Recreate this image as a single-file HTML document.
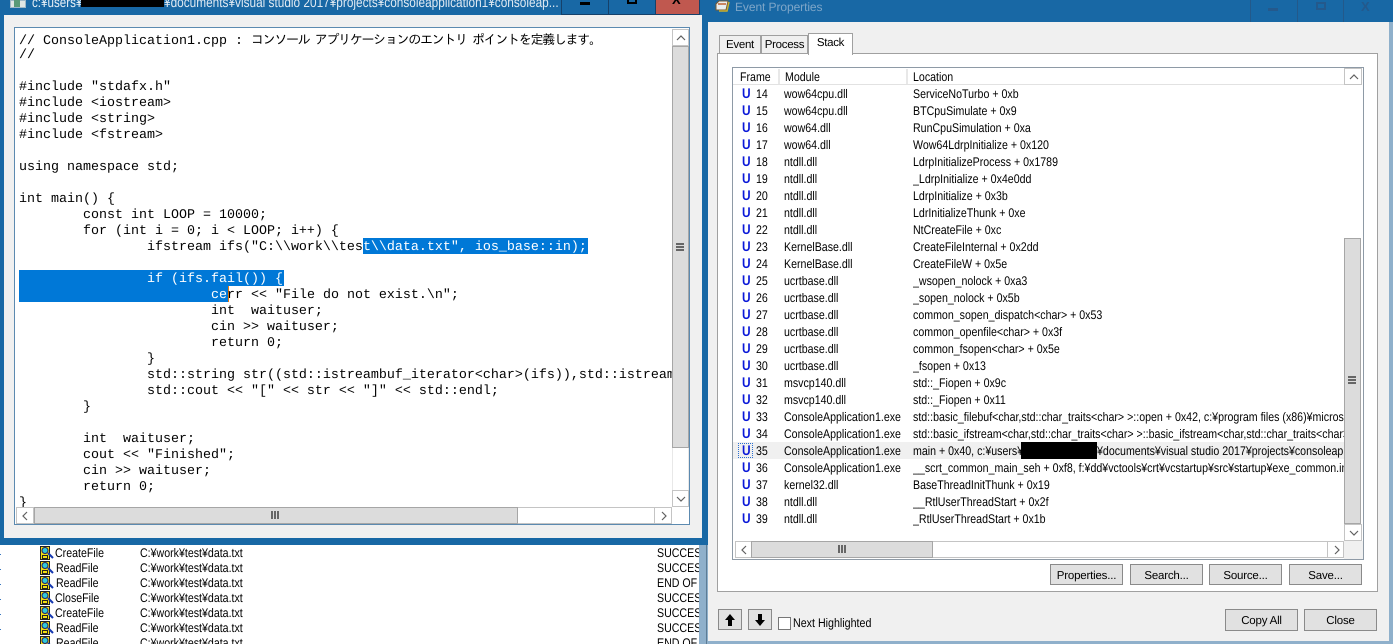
<!DOCTYPE html>
<html><head><meta charset="utf-8"><style>
html,body{margin:0;padding:0;width:1393px;height:644px;overflow:hidden;background:#fff}
div,span{position:absolute;box-sizing:border-box}
svg{position:absolute}
body{font-family:"Liberation Sans","Noto Sans CJK JP",sans-serif;color:#000;text-rendering:geometricPrecision}
.ui{font-size:12.5px;transform:scaleX(.855);transform-origin:left center;white-space:pre;line-height:15px}
.bg{white-space:pre;font-size:12.5px;transform:scaleX(.85);transform-origin:left center;line-height:15px;color:#000}
.code{left:19px;top:30px;font:13.33px/16px "Liberation Mono","IPAGothic",monospace;white-space:normal;width:1000px;color:#000}
.l{position:static;display:block;height:16px;white-space:pre}
.sb{background:#fff;border:1px solid #c4c4c4}
.th{background:#dcdcdc;border:1px solid #a6a6a6}
.btn{background:#e1e1e1;border:1px solid #8a8a8a;font-size:11.5px;letter-spacing:-.2px;text-align:center;line-height:22px;color:#000}
.r{position:relative;display:block;height:17px;width:612px;line-height:17px;font-size:12.5px;white-space:pre;color:#000}
.r b{position:absolute;left:9px;top:-1px;color:#0a18d8;font:bold 14px/17px "Liberation Sans",sans-serif;transform:scaleX(.85);transform-origin:left center}
.r i,.r u,.r s,.r em{position:absolute;font-style:normal;text-decoration:none;top:0;transform:scaleX(.85);transform-origin:left center}
.r i{left:23px}.r u{left:51px}.r s{left:180px;width:507px;overflow:hidden}.r em{left:364px;width:290px;overflow:hidden}
.hc{top:69px;height:15px;line-height:16px;font-size:12.5px;transform:scaleX(.85);transform-origin:left center;color:#000;white-space:pre}
.tab{font-size:11.5px;letter-spacing:-.3px;text-align:center;border:1px solid #a0a0a0;background:#f0f0f0;color:#000}
</style></head><body>

<svg width="0" height="0" style="position:absolute"><defs>
<symbol id="fi" viewBox="0 0 14 14"><rect x="0.5" y="0.5" width="9" height="13" fill="#f4e010" stroke="#222"/><circle cx="5" cy="4.5" r="3" fill="#30c8d8" stroke="#226"/><rect x="2.5" y="9.5" width="5" height="3" fill="#f4e010" stroke="#222"/><path d="M8 7L13 12" stroke="#1438b0" stroke-width="2"/></symbol>
</defs></svg>

<!-- Background list -->
<div style="left:0;top:545px;width:700px;height:99px;background:#fff;overflow:hidden">
<div style="left:0;top:3px;width:1px;height:96px;background:repeating-linear-gradient(#fff 0 6px,#3a78c0 6px 7px,#fff 7px 15px)"></div>
<svg style="left:40px;top:1px" width="14" height="14"><use href="#fi"/></svg>
<svg style="left:40px;top:16px" width="14" height="14"><use href="#fi"/></svg>
<svg style="left:40px;top:31px" width="14" height="14"><use href="#fi"/></svg>
<svg style="left:40px;top:46px" width="14" height="14"><use href="#fi"/></svg>
<svg style="left:40px;top:61px" width="14" height="14"><use href="#fi"/></svg>
<svg style="left:40px;top:76px" width="14" height="14"><use href="#fi"/></svg>
<svg style="left:40px;top:91px" width="14" height="14"><use href="#fi"/></svg>
<span class="bg" style="left:55px;top:1px">CreateFile</span><span class="bg" style="left:140px;top:1px">C:¥work¥test¥data.txt</span><span class="bg" style="left:657px;top:1px">SUCCESS</span>
<span class="bg" style="left:56px;top:16px">ReadFile</span><span class="bg" style="left:140px;top:16px">C:¥work¥test¥data.txt</span><span class="bg" style="left:657px;top:16px">SUCCESS</span>
<span class="bg" style="left:56px;top:31px">ReadFile</span><span class="bg" style="left:140px;top:31px">C:¥work¥test¥data.txt</span><span class="bg" style="left:657px;top:31px">END OF FILE</span>
<span class="bg" style="left:55px;top:46px">CloseFile</span><span class="bg" style="left:140px;top:46px">C:¥work¥test¥data.txt</span><span class="bg" style="left:657px;top:46px">SUCCESS</span>
<span class="bg" style="left:55px;top:61px">CreateFile</span><span class="bg" style="left:140px;top:61px">C:¥work¥test¥data.txt</span><span class="bg" style="left:657px;top:61px">SUCCESS</span>
<span class="bg" style="left:56px;top:76px">ReadFile</span><span class="bg" style="left:140px;top:76px">C:¥work¥test¥data.txt</span><span class="bg" style="left:657px;top:76px">SUCCESS</span>
<span class="bg" style="left:56px;top:91px">ReadFile</span><span class="bg" style="left:140px;top:91px">C:¥work¥test¥data.txt</span><span class="bg" style="left:657px;top:91px">END OF FILE</span>
</div>
<div style="left:699px;top:545px;width:7px;height:99px;background:#8fb0cb"></div>

<!-- Left window -->
<div style="left:0;top:0;width:707px;height:545px;background:#1868a5;overflow:hidden">
  <div style="left:10px;top:0;width:16px;height:8px;background:#dfe6e4;border:1px solid #9fb8c8"></div>
  <div style="left:14px;top:0;width:6px;height:7px;background:#5a9a78"></div>
  <span style="left:32px;top:-6px;font-size:14px;line-height:16px;color:#e8f0f6;transform:scaleX(.83);transform-origin:left center;white-space:pre">c:¥users¥</span>
  <span style="left:164px;top:-6px;font-size:14px;line-height:16px;color:#dfe9f2;transform:scaleX(.845);transform-origin:left center;white-space:pre">¥documents¥visual studio 2017¥projects¥consoleapplication1¥consoleap...</span>
  <div style="left:81px;top:0;width:83px;height:7px;background:#000"></div>
  <div style="left:561px;top:0;width:48px;height:15px;background:#1868a5;border:1px solid #16416a;border-top:0"></div>
  <div style="left:608px;top:0;width:48px;height:15px;background:#1868a5;border:1px solid #16416a;border-top:0"></div>
  <div style="left:655px;top:0;width:45px;height:15px;background:#c0584f;border:1px solid #16416a;border-top:0"></div>
  <div style="left:580px;top:2px;width:10px;height:3px;background:#000"></div>
  <div style="left:627px;top:-3px;width:10px;height:7px;border:2px solid #000"></div>
  <span style="left:672px;top:-6px;font:bold 13px/12px 'Liberation Sans',sans-serif">X</span>

  <div style="left:4px;top:15px;width:698px;height:523px;background:#f0f0f0"></div>
  <div style="left:14px;top:27px;width:676px;height:498px;background:#fff;border:1px solid #5c8ab0;overflow:hidden"></div>

  <div style="left:15px;top:28px;width:657px;height:479px;overflow:hidden">
    <div style="top:210px;width:225px;height:16px;left:348px;background:#0078d7"></div>
    <div style="left:4px;top:242px;width:265px;height:16px;background:#0078d7"></div>
    <div style="left:4px;top:258px;width:209px;height:16px;background:#0078d7"></div>
    <div style="left:213px;top:258px;width:1px;height:16px;background:#e87a10"></div>
    <div class="code" style="left:4px;top:4px">
<span class="l">// ConsoleApplication1.cpp : <span style="position:static;font-size:13px;letter-spacing:-1.3px;font-family:'IPAGothic','Noto Sans CJK JP',monospace">コンソール アプリケーションのエントリ ポイントを定義します。</span></span>
<span class="l">//</span>
<span class="l"> </span>
<span class="l">#include "stdafx.h"</span>
<span class="l">#include &lt;iostream&gt;</span>
<span class="l">#include &lt;string&gt;</span>
<span class="l">#include &lt;fstream&gt;</span>
<span class="l"> </span>
<span class="l">using namespace std;</span>
<span class="l"> </span>
<span class="l">int main() {</span>
<span class="l">        const int LOOP = 10000;</span>
<span class="l">        for (int i = 0; i &lt; LOOP; i++) {</span>
<span class="l">                ifstream ifs("C:\\work\\tes<span style="position:static;color:#fff">t\\data.txt", ios_base::in);</span></span>
<span class="l"> </span>
<span class="l" style="color:#fff">                if (ifs.fail()) {</span>
<span class="l">                        <span style="position:static;color:#fff">ce</span>rr &lt;&lt; "File do not exist.\n";</span>
<span class="l">                        int  waituser;</span>
<span class="l">                        cin &gt;&gt; waituser;</span>
<span class="l">                        return 0;</span>
<span class="l">                }</span>
<span class="l">                std::string str((std::istreambuf_iterator&lt;char&gt;(ifs)),std::istreambuf_iterator&lt;char&gt;());</span>
<span class="l">                std::cout &lt;&lt; "[" &lt;&lt; str &lt;&lt; "]" &lt;&lt; std::endl;</span>
<span class="l">        }</span>
<span class="l"> </span>
<span class="l">        int  waituser;</span>
<span class="l">        cout &lt;&lt; "Finished";</span>
<span class="l">        cin &gt;&gt; waituser;</span>
<span class="l">        return 0;</span>
<span class="l">}</span>
    </div>
  </div>

  <!-- v scroll -->
  <div class="sb" style="left:672px;top:29px;width:17px;height:17px"><svg style="left:3px;top:4px" width="10" height="8"><path d="M1 6L5 2L9 6" fill="none" stroke="#606060" stroke-width="1.2"/></svg></div>
  <div style="left:672px;top:46px;width:17px;height:444px;background:#fff;border-left:1px solid #e8e8e8;border-right:1px solid #e8e8e8"></div>
  <div class="th" style="left:672px;top:46px;width:17px;height:402px"></div>
  <div style="left:676px;top:243px;width:8px;height:8px;background:repeating-linear-gradient(#666 0 2px,#dcdcdc 2px 3px)"></div>
  <div class="sb" style="left:672px;top:490px;width:17px;height:17px"><svg style="left:3px;top:4px" width="10" height="8"><path d="M1 2L5 6L9 2" fill="none" stroke="#606060" stroke-width="1.2"/></svg></div>
  <!-- h scroll -->
  <div class="sb" style="left:16px;top:507px;width:656px;height:17px"></div>
  <div class="sb" style="left:16px;top:507px;width:18px;height:17px"><svg style="left:4px;top:3px" width="8" height="10"><path d="M6 1L2 5L6 9" fill="none" stroke="#606060" stroke-width="1.2"/></svg></div>
  <div class="th" style="left:34px;top:507px;width:484px;height:17px"></div>
  <div style="left:271px;top:511px;width:8px;height:8px;background:repeating-linear-gradient(90deg,#666 0 2px,#dcdcdc 2px 3px)"></div>
  <div class="sb" style="left:654px;top:507px;width:18px;height:17px"><svg style="left:5px;top:3px" width="8" height="10"><path d="M2 1L6 5L2 9" fill="none" stroke="#606060" stroke-width="1.2"/></svg></div>
</div>

<!-- Right window -->
<div style="left:706px;top:0;width:687px;height:644px;background:#8fb0cb;overflow:hidden">
  <div style="left:0;top:0;width:687px;height:22px;background:#1868a5"></div>
  <div style="left:0;top:22px;width:2px;height:523px;background:#1868a5"></div>
  <div style="left:0;top:545px;width:1px;height:99px;background:#5d7c95"></div>
  <svg style="left:9px;top:0" width="15" height="13"><path d="M1 4L4 1H13L11 10H1Z" fill="#e8eef0" stroke="#7a5a30"/><path d="M4 11H12L14 2" fill="none" stroke="#c8b030" stroke-width="1.5"/><path d="M3 4H11" stroke="#c06030" stroke-width="1.5"/></svg>
  <span style="left:29px;top:0;font-size:12px;line-height:14px;color:#7ea6c8;letter-spacing:-.08px;white-space:pre">Event Properties</span>
  <div style="left:544px;top:0;width:1px;height:22px;background:#23598a"></div>
  <div style="left:591px;top:0;width:1px;height:22px;background:#23598a"></div>
  <div style="left:637px;top:0;width:1px;height:22px;background:#23598a"></div>
  <div style="left:562px;top:8px;width:10px;height:3px;background:#24598c"></div>
  <div style="left:610px;top:2px;width:10px;height:8px;border:2px solid #24598c"></div>
  <span style="left:655px;top:1px;font:bold 13px/12px 'Liberation Sans',sans-serif;color:#24598c">X</span>

  <div style="left:2px;top:22px;width:681px;height:619px;background:#f0f0f0"></div>

  <!-- panel -->
  <div style="left:11px;top:53px;width:661px;height:539px;background:#fff;border:1px solid #a0a0a0"></div>
  <div class="tab" style="left:13px;top:35px;width:42px;height:19px;line-height:19px">Event</div>
  <div class="tab" style="left:55px;top:35px;width:47px;height:19px;line-height:19px">Process</div>
  <div class="tab" style="left:102px;top:33px;width:45px;height:22px;line-height:19px;background:#fff;border-bottom:0">Stack</div>

  <!-- list -->
  <div style="left:26px;top:67px;width:632px;height:493px;background:#fff;border:1px solid #8e9aa6;overflow:hidden"></div>
  <div style="left:27px;top:68px;width:612px;height:17px;background:#fff;border-bottom:1px solid #e2e2e2"></div>
  <div style="left:72px;top:69px;width:2px;height:15px;background:#e8e8e8"></div>
  <div style="left:200px;top:69px;width:2px;height:15px;background:#e8e8e8"></div>
  <span class="hc" style="left:34px">Frame</span>
  <span class="hc" style="left:79px">Module</span>
  <span class="hc" style="left:207px">Location</span>

  <div style="left:27px;top:442px;width:612px;height:17px;background:#f0f0f0"></div>
  <div style="left:32px;top:443px;width:15px;height:15px;border:1px dotted #2a6fd0"></div>
  <div style="left:27px;top:86px;width:612px;height:440px;overflow:hidden">
<span class="r"><b>U</b><i>14</i><u>wow64cpu.dll</u><s>ServiceNoTurbo + 0xb</s></span>
<span class="r"><b>U</b><i>15</i><u>wow64cpu.dll</u><s>BTCpuSimulate + 0x9</s></span>
<span class="r"><b>U</b><i>16</i><u>wow64.dll</u><s>RunCpuSimulation + 0xa</s></span>
<span class="r"><b>U</b><i>17</i><u>wow64.dll</u><s>Wow64LdrpInitialize + 0x120</s></span>
<span class="r"><b>U</b><i>18</i><u>ntdll.dll</u><s>LdrpInitializeProcess + 0x1789</s></span>
<span class="r"><b>U</b><i>19</i><u>ntdll.dll</u><s>_LdrpInitialize + 0x4e0dd</s></span>
<span class="r"><b>U</b><i>20</i><u>ntdll.dll</u><s>LdrpInitialize + 0x3b</s></span>
<span class="r"><b>U</b><i>21</i><u>ntdll.dll</u><s>LdrInitializeThunk + 0xe</s></span>
<span class="r"><b>U</b><i>22</i><u>ntdll.dll</u><s>NtCreateFile + 0xc</s></span>
<span class="r"><b>U</b><i>23</i><u>KernelBase.dll</u><s>CreateFileInternal + 0x2dd</s></span>
<span class="r"><b>U</b><i>24</i><u>KernelBase.dll</u><s>CreateFileW + 0x5e</s></span>
<span class="r"><b>U</b><i>25</i><u>ucrtbase.dll</u><s>_wsopen_nolock + 0xa3</s></span>
<span class="r"><b>U</b><i>26</i><u>ucrtbase.dll</u><s>_sopen_nolock + 0x5b</s></span>
<span class="r"><b>U</b><i>27</i><u>ucrtbase.dll</u><s>common_sopen_dispatch&lt;char&gt; + 0x53</s></span>
<span class="r"><b>U</b><i>28</i><u>ucrtbase.dll</u><s>common_openfile&lt;char&gt; + 0x3f</s></span>
<span class="r"><b>U</b><i>29</i><u>ucrtbase.dll</u><s>common_fsopen&lt;char&gt; + 0x5e</s></span>
<span class="r"><b>U</b><i>30</i><u>ucrtbase.dll</u><s>_fsopen + 0x13</s></span>
<span class="r"><b>U</b><i>31</i><u>msvcp140.dll</u><s>std::_Fiopen + 0x9c</s></span>
<span class="r"><b>U</b><i>32</i><u>msvcp140.dll</u><s>std::_Fiopen + 0x11</s></span>
<span class="r"><b>U</b><i>33</i><u>ConsoleApplication1.exe</u><s>std::basic_filebuf&lt;char,std::char_traits&lt;char&gt; &gt;::open + 0x42, c:¥program files (x86)¥microsoft visual studio</s></span>
<span class="r"><b>U</b><i>34</i><u>ConsoleApplication1.exe</u><s>std::basic_ifstream&lt;char,std::char_traits&lt;char&gt; &gt;::basic_ifstream&lt;char,std::char_traits&lt;char&gt; &gt;</s></span>
<span class="r"><b>U</b><i>35</i><u>ConsoleApplication1.exe</u><s>main + 0x40, c:¥users¥</s><em>¥documents¥visual studio 2017¥projects¥consoleapplication1</em></span>
<span class="r"><b>U</b><i>36</i><u>ConsoleApplication1.exe</u><s>__scrt_common_main_seh + 0xf8, f:¥dd¥vctools¥crt¥vcstartup¥src¥startup¥exe_common.inl</s></span>
<span class="r"><b>U</b><i>37</i><u>kernel32.dll</u><s>BaseThreadInitThunk + 0x19</s></span>
<span class="r"><b>U</b><i>38</i><u>ntdll.dll</u><s>__RtlUserThreadStart + 0x2f</s></span>
<span class="r"><b>U</b><i>39</i><u>ntdll.dll</u><s>_RtlUserThreadStart + 0x1b</s></span>
  </div>
  <div style="left:315px;top:442px;width:76px;height:17px;background:#000"></div>

  <!-- list v scroll -->
  <div class="sb" style="left:638px;top:68px;width:18px;height:17px"><svg style="left:4px;top:4px" width="10" height="8"><path d="M1 6L5 2L9 6" fill="none" stroke="#606060" stroke-width="1.2"/></svg></div>
  <div class="th" style="left:638px;top:238px;width:17px;height:286px"></div>
  <div style="left:642px;top:376px;width:8px;height:8px;background:repeating-linear-gradient(#666 0 2px,#dcdcdc 2px 3px)"></div>
  <div class="sb" style="left:638px;top:524px;width:18px;height:17px"><svg style="left:4px;top:4px" width="10" height="8"><path d="M1 2L5 6L9 2" fill="none" stroke="#606060" stroke-width="1.2"/></svg></div>
  <div style="left:638px;top:541px;width:19px;height:18px;background:#f0f0f0"></div>
  <!-- list h scroll -->
  <div class="sb" style="left:29px;top:541px;width:609px;height:17px"></div>
  <div class="sb" style="left:29px;top:541px;width:17px;height:17px"><svg style="left:4px;top:3px" width="8" height="10"><path d="M6 1L2 5L6 9" fill="none" stroke="#606060" stroke-width="1.2"/></svg></div>
  <div class="th" style="left:45px;top:541px;width:182px;height:17px"></div>
  <div style="left:132px;top:545px;width:8px;height:8px;background:repeating-linear-gradient(90deg,#666 0 2px,#dcdcdc 2px 3px)"></div>
  <div class="sb" style="left:621px;top:541px;width:17px;height:17px"><svg style="left:5px;top:3px" width="8" height="10"><path d="M2 1L6 5L2 9" fill="none" stroke="#606060" stroke-width="1.2"/></svg></div>

  <!-- buttons -->
  <div class="btn" style="left:344px;top:564px;width:73px;height:21px">Properties...</div>
  <div class="btn" style="left:424px;top:564px;width:73px;height:21px">Search...</div>
  <div class="btn" style="left:503px;top:564px;width:73px;height:21px">Source...</div>
  <div class="btn" style="left:583px;top:564px;width:73px;height:21px">Save...</div>
  <div class="btn" style="left:519px;top:609px;width:73px;height:22px">Copy All</div>
  <div class="btn" style="left:598px;top:609px;width:73px;height:22px">Close</div>
  <div class="btn" style="left:12px;top:609px;width:24px;height:21px"><svg style="left:5px;top:3px" width="12" height="14"><path d="M6 1L1 7H4V13H8V7H11Z" fill="#000"/></svg></div>
  <div class="btn" style="left:42px;top:609px;width:24px;height:21px"><svg style="left:5px;top:3px" width="12" height="14"><path d="M6 13L1 7H4V1H8V7H11Z" fill="#000"/></svg></div>
  <div style="left:72px;top:617px;width:13px;height:13px;background:#fff;border:1px solid #777"></div>
  <span class="ui" style="left:87px;top:616px;color:#000">Next Highlighted</span>
</div>
</body></html>
